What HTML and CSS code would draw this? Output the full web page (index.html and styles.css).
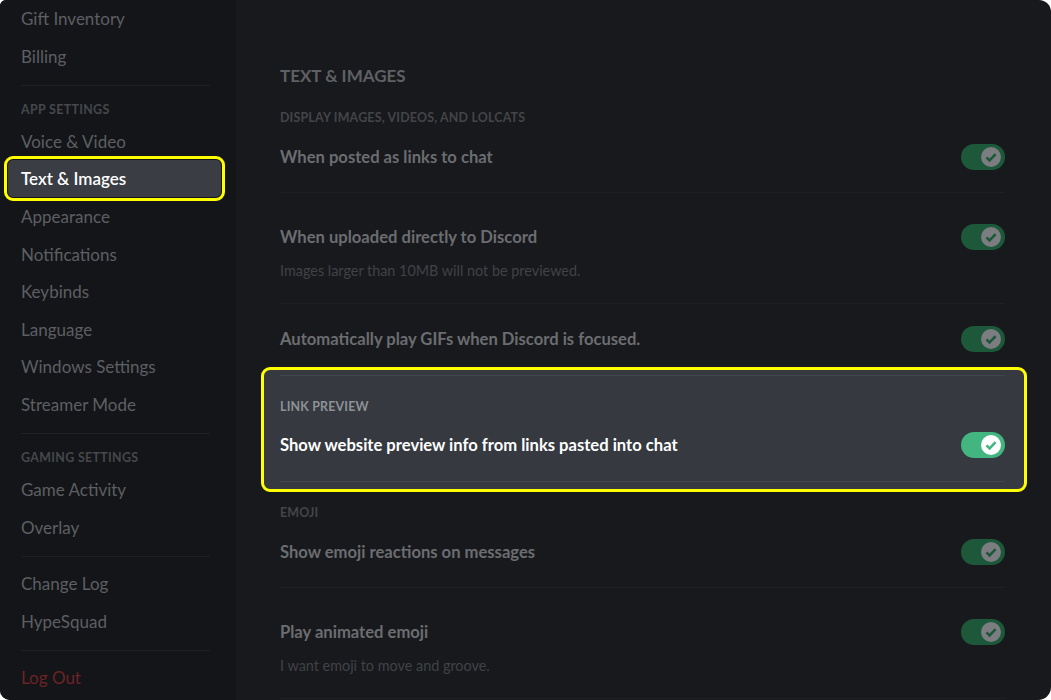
FILE: index.html
```html
<!DOCTYPE html>
<html lang="en">
<head>
<meta charset="utf-8">
<title>Text &amp; Images</title>
<link rel="stylesheet" href="styles.css">
</head>
<body>
<div class="app">
  <nav class="sidebar">
    <div class="item">Gift Inventory</div>
    <div class="item">Billing</div>
    <div class="sep"></div>
    <div class="nav-header">App Settings</div>
    <div class="item">Voice &amp; Video</div>
    <div class="item selected">Text &amp; Images</div>
    <div class="item">Appearance</div>
    <div class="item">Notifications</div>
    <div class="item">Keybinds</div>
    <div class="item">Language</div>
    <div class="item">Windows Settings</div>
    <div class="item">Streamer Mode</div>
    <div class="sep"></div>
    <div class="nav-header">Gaming Settings</div>
    <div class="item">Game Activity</div>
    <div class="item">Overlay</div>
    <div class="sep"></div>
    <div class="item">Change Log</div>
    <div class="item">HypeSquad</div>
    <div class="sep"></div>
    <div class="item danger">Log Out</div>
  </nav>
  <main class="content">
    <h2 class="page-title">Text &amp; Images</h2>

    <h5 class="section-header">Display images, videos, and lolcats</h5>
    <div class="row first">
      <div class="row-line">
        <span class="title">When posted as links to chat</span>
        <span class="toggle"><svg viewBox="0 0 20 20"><path d="M5.5 10.4 L8.6 13.4 L14.6 7.2"/></svg></span>
      </div>
    </div>
    <div class="row tall">
      <div class="row-line">
        <span class="title">When uploaded directly to Discord</span>
        <span class="toggle"><svg viewBox="0 0 20 20"><path d="M5.5 10.4 L8.6 13.4 L14.6 7.2"/></svg></span>
      </div>
      <div class="desc">Images larger than 10MB will not be previewed.</div>
    </div>
    <div class="row last-before-box">
      <div class="row-line">
        <span class="title">Automatically play GIFs when Discord is focused.</span>
        <span class="toggle"><svg viewBox="0 0 20 20"><path d="M5.5 10.4 L8.6 13.4 L14.6 7.2"/></svg></span>
      </div>
    </div>

    <section class="highlight">
      <div class="hl-divider"></div>
      <h5 class="section-header">Link Preview</h5>
      <div class="row first">
        <div class="row-line">
          <span class="title">Show website preview info from links pasted into chat</span>
          <span class="toggle"><svg viewBox="0 0 20 20"><path d="M5.5 10.4 L8.6 13.4 L14.6 7.2"/></svg></span>
        </div>
      </div>
    </section>

    <h5 class="section-header after-box">Emoji</h5>
    <div class="row first">
      <div class="row-line">
        <span class="title">Show emoji reactions on messages</span>
        <span class="toggle"><svg viewBox="0 0 20 20"><path d="M5.5 10.4 L8.6 13.4 L14.6 7.2"/></svg></span>
      </div>
    </div>
    <div class="row tall">
      <div class="row-line">
        <span class="title">Play animated emoji</span>
        <span class="toggle"><svg viewBox="0 0 20 20"><path d="M5.5 10.4 L8.6 13.4 L14.6 7.2"/></svg></span>
      </div>
      <div class="desc">I want emoji to move and groove.</div>
    </div>
  </main>
</div>
</body>
</html>
```

FILE: styles.css
```css
* { box-sizing: border-box; }

html, body {
  margin: 0;
  padding: 0;
  background: #ffffff;
}

body {
  font-family: Lato, "Noto Sans", sans-serif;
  width: 1051px;
  height: 700px;
  overflow: hidden;
}

.app {
  display: flex;
  width: 1051px;
  height: 700px;
  border-radius: 6px 12px 13px 10px;
  overflow: hidden;
  background: #18191c;
}

/* ---------- Sidebar ---------- */
.sidebar {
  width: 236px;
  flex: 0 0 236px;
  background: #141518;
  padding: 0 15px 0 8px;
  display: flex;
  flex-direction: column;
}

.item {
  height: 37.5px;
  flex: 0 0 37.5px;
  display: flex;
  align-items: center;
  padding-left: 13px;
  font-size: 17px;
  color: #5d5f63;
  border-radius: 4px;
  white-space: nowrap;
}

.item.selected {
  background: #3a3d44;
  color: #ffffff;
  font-weight: 600;
  outline: 3px solid #ffff00;
  outline-offset: 1px;
  border-radius: 5px;
  height: 37px;
  flex-basis: 37px;
  margin: -0.5px 0 1px;
}

.item.danger {
  color: #6b2326;
}

.sep {
  height: 1px;
  flex: 0 0 1px;
  background: #1f2024;
  margin: 10px 11px 8px 13px;
}

.nav-header {
  height: 16px;
  line-height: 16px;
  margin: 7px 0 6px;
  padding: 1px 0 0 13px;
  font-size: 12.4px;
  font-weight: 700;
  text-transform: uppercase;
  letter-spacing: 0.35px;
  color: #46484c;
}

/* ---------- Content ---------- */
.content {
  flex: 1;
  padding: 66px 46px 0 44px;
}

.page-title {
  margin: 0 0 23px;
  height: 20px;
  line-height: 20px;
  font-size: 17px;
  font-weight: 700;
  text-transform: uppercase;
  color: #5e6064;
}

.section-header {
  margin: 0;
  height: 16px;
  line-height: 16px;
  padding-top: 1px;
  font-size: 12.4px;
  font-weight: 700;
  text-transform: uppercase;
  letter-spacing: 0.2px;
  color: #434549;
}

.section-header.after-box {
  margin-top: 12px;
}

.row {
  padding: 23px 0 23px;
  border-bottom: 1px solid #1f2023;
}

.row.first {
  padding-top: 20px;
}

.row.tall {
  padding-top: 32px;
  padding-bottom: 22px;
}

.row.last-before-box {
  border-bottom: none;
  padding-bottom: 16px;
}

.row-line {
  display: flex;
  align-items: center;
  justify-content: space-between;
  height: 24px;
}

.title {
  font-size: 16.6px;
  font-weight: 700;
  color: #6b6d71;
  white-space: nowrap;
}

.desc {
  margin-top: 12px;
  height: 20px;
  line-height: 20px;
  font-size: 14.4px;
  color: #404246;
}

.toggle {
  width: 44px;
  height: 26px;
  border-radius: 13px;
  background: #1d583a;
  display: flex;
  align-items: center;
  justify-content: flex-end;
  padding-right: 4px;
  flex: 0 0 auto;
}

.toggle svg {
  width: 20px;
  height: 20px;
  border-radius: 50%;
  background: #7b7d80;
  fill: none;
  stroke: #1d583a;
  stroke-width: 2.6;
  stroke-linecap: butt;
  stroke-linejoin: miter;
}

/* ---------- Highlighted block ---------- */
.highlight {
  margin: 0 -22px 0 -19px;
  padding: 5px 19px 7px 16px;
  background: #36393f;
  border: 3px solid #ffff00;
  border-radius: 9px;
}

.hl-divider {
  height: 1px;
  background: #42454b;
  margin-bottom: 22px;
}

.highlight .section-header {
  color: #8e9297;
}

.highlight .row {
  border-bottom-color: #42454b;
  padding-top: 19px;
  padding-bottom: 24px;
}

.highlight .title {
  color: #ffffff;
}

.highlight .toggle {
  background: #43b581;
}

.highlight .toggle svg {
  background: #ffffff;
  stroke: #43b581;
}
```
